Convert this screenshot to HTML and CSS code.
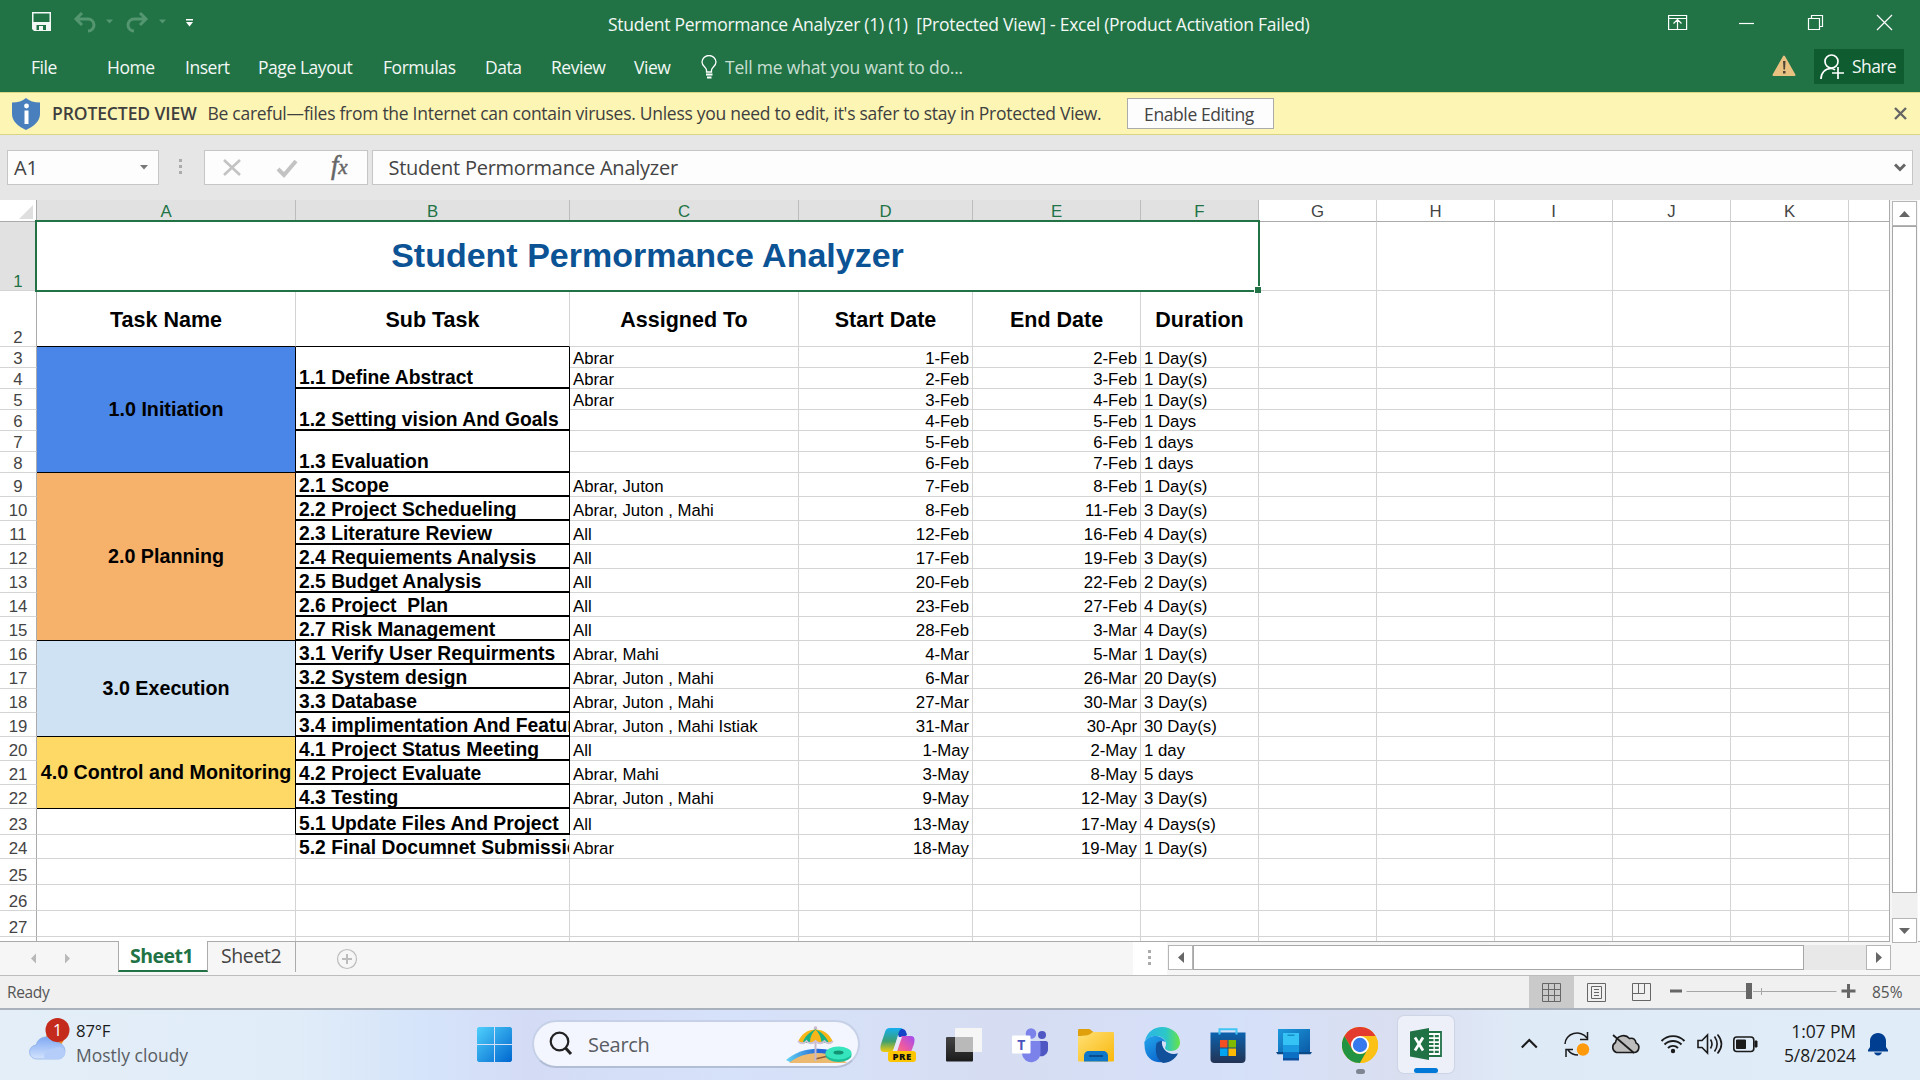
FILE: index.html
```html
<!DOCTYPE html>
<html lang="en">
<head>
<meta charset="utf-8">
<title>Student Permormance Analyzer - Excel</title>
<link rel="stylesheet" href="styles.css">
</head>
<body>
<div class="app">
  <header class="titlebar">
    <div class="quick">
      <svg width="200" height="30" viewBox="0 0 200 30">
        <path fill="#f4f8f5" fill-rule="evenodd" d="M0 3h19v19H2l-2-2zM1.500 4.500v8.500h16V4.500zM4.500 16v5h2.500v-4h4v4h3v-5z"/>
        <path fill="#f4f8f5" d="M8 18h1.500v3H8z"/>
        <g fill="none" stroke="#539670" stroke-width="3"><path d="M50 4l-6 6 6 6M45 10h11a5.500 5.500 0 0 1 0 12"/><path d="M108 4l6 6-6 6M113 10h-11a5.500 5.500 0 0 0 0 12"/></g>
        <path fill="#539670" d="M74 10.500h7l-3.500 4zM127 10.500h7l-3.500 4z"/>
        <path fill="#fff" d="M154 10h7v1.500h-7zM154 13h7l-3.500 4.500z"/>
      </svg>
    </div>
    <h1 class="doc-title">Student Permormance Analyzer (1) (1)&nbsp; [Protected View] - Excel (Product Activation Failed)</h1>
    <svg class="window-buttons" width="226" height="20" viewBox="0 0 226 20" fill="none" stroke="#fff" stroke-width="1.200">
      <path d="M.6 1.500h18v14H.6zM.6 4.500h18M9.500 15V6.500M5.500 9.500l4-4 4 4"/>
      <path d="M71 9.500h15"/>
      <path d="M140.500 4.500h11v11h-11zM143.500 4v-2.500h11v11h-3"/>
      <path d="M209 1l15 15M224 1l-15 15"/>
    </svg>
  </header>
  <nav class="ribbon">
    <span>File</span><span>Home</span><span>Insert</span><span>Page Layout</span><span>Formulas</span><span>Data</span><span>Review</span><span>View</span>
    <svg width="24" height="26" viewBox="0 0 24 26" fill="none" stroke="#fff" stroke-width="1.300"><path d="M5.500 17v-2C5 12 1 11 1 7a7 6.500 0 0 1 14 0c0 4-4 5-4.500 8v2z"/><path d="M5 19.500h6.500M6 22.500h4.500" stroke-width="2"/></svg>
    <span class="tell">Tell me what you want to do...</span>
    <svg class="warn" width="24" height="22" viewBox="0 0 24 22"><path d="M12 1.500L22.500 20h-21z" fill="#e9c181" stroke="#e9c181" stroke-width="2" stroke-linejoin="round"/><path d="M11 6h2.500l-.5 8.500h-1.500zM11 16h2.500v2.500H11z" fill="#4d4636"/></svg>
    <div class="share">
      <svg width="26" height="26" viewBox="0 0 26 26" fill="none" stroke="#fff" stroke-width="1.700"><ellipse cx="11.500" cy="7.500" rx="6.500" ry="6.500"/><path d="M1 25c0-6 4-10.500 10-10.500 2 0 3 .5 4 1.500M18 13v12M12 19h12"/></svg>
      <span>Share</span>
    </div>
  </nav>
  <section class="protected">
    <svg width="30" height="34" viewBox="0 0 30 34"><path d="M15 1c3.500 3 8 4.500 14 4.500V17c0 7-6 12.500-14 16C7 29.500 1 24 1 17V5.500C7 5.500 11.500 4 15 1z" fill="#4a7fbe"/><circle cx="15.500" cy="9" r="2.400" fill="#fff"/><path d="M13.500 13.500h4V27h-4z" fill="#fff"/></svg>
    <b>PROTECTED VIEW</b>
    <span class="warning-text">Be careful—files from the Internet can contain viruses. Unless you need to edit, it's safer to stay in Protected View.</span>
    <button class="enable">Enable Editing</button>
    <svg class="dismiss" width="13" height="13" viewBox="0 0 13 13"><path d="M1 1l11 11M12 1L1 12" stroke="#666" stroke-width="2.400"/></svg>
  </section>
  <section class="formula-bar">
    <div class="name-box"><span>A1</span><svg width="8" height="5" viewBox="0 0 8 5"><path d="M0 0h8L4 4.500z" fill="#777"/></svg></div>
    <div class="dots"><i></i><i></i><i></i></div>
    <div class="fx-box">
      <svg width="163" height="32" viewBox="0 0 163 32"><path d="M19 8l16 15M35 8L19 23" stroke="#c3c3c3" stroke-width="2.600"/><path d="M73 17l6 6L91 9" fill="none" stroke="#c3c3c3" stroke-width="4"/></svg>
      <em>f<small>x</small></em>
    </div>
    <div class="formula"><span>Student Permormance Analyzer</span><svg width="12" height="9" viewBox="0 0 12 9"><path d="M1 1.500l5 5 5-5" fill="none" stroke="#666" stroke-width="3"/></svg></div>
  </section>

  <main class="workspace">
    <table class="sheet">
      <colgroup><col class="w-head"><col class="w-a"><col class="w-b"><col class="w-c"><col class="w-d"><col class="w-e"><col class="w-g"><col class="w-g"><col class="w-g"><col class="w-g"><col class="w-g"><col class="w-g"><col class="w-l"></colgroup>
      <tr class="letters"><th class="corner"><svg width="14" height="14" viewBox="0 0 14 14"><path d="M14 0v14H0z" fill="#dfdfdf"/></svg></th><th class="on">A</th><th class="on">B</th><th class="on">C</th><th class="on">D</th><th class="on">E</th><th class="on">F</th><th>G</th><th>H</th><th>I</th><th>J</th><th>K</th><th></th></tr>
      <tr class="r69"><th class="on">1</th><td class="title" colspan="6">Student Permormance Analyzer<span class="selection"></span></td><td></td><td></td><td></td><td></td><td></td><td></td></tr>
      <tr class="r56 heads"><th>2</th><td class="line">Task Name</td><td class="line">Sub Task</td><td>Assigned To</td><td>Start Date</td><td>End Date</td><td>Duration</td><td></td><td></td><td></td><td></td><td></td><td></td></tr>
      <tr class="r21"><th>3</th><td rowspan="6" class="phase blue">1.0 Initiation</td><td rowspan="2" class="sub">1.1 Define Abstract</td><td>Abrar</td><td class="num">1-Feb</td><td class="num">2-Feb</td><td>1 Day(s)</td><td></td><td></td><td></td><td></td><td></td><td></td></tr>
      <tr class="r21"><th>4</th><td>Abrar</td><td class="num">2-Feb</td><td class="num">3-Feb</td><td>1 Day(s)</td><td></td><td></td><td></td><td></td><td></td><td></td></tr>
      <tr class="r21"><th>5</th><td rowspan="2" class="sub">1.2 Setting vision And Goals</td><td>Abrar</td><td class="num">3-Feb</td><td class="num">4-Feb</td><td>1 Day(s)</td><td></td><td></td><td></td><td></td><td></td><td></td></tr>
      <tr class="r21"><th>6</th><td></td><td class="num">4-Feb</td><td class="num">5-Feb</td><td>1 Days</td><td></td><td></td><td></td><td></td><td></td><td></td></tr>
      <tr class="r21"><th>7</th><td rowspan="2" class="sub">1.3 Evaluation</td><td></td><td class="num">5-Feb</td><td class="num">6-Feb</td><td>1 days</td><td></td><td></td><td></td><td></td><td></td><td></td></tr>
      <tr class="r21"><th>8</th><td></td><td class="num">6-Feb</td><td class="num">7-Feb</td><td>1 days</td><td></td><td></td><td></td><td></td><td></td><td></td></tr>
      <tr class="r24"><th>9</th><td rowspan="7" class="phase orange">2.0 Planning</td><td class="sub">2.1 Scope</td><td>Abrar, Juton</td><td class="num">7-Feb</td><td class="num">8-Feb</td><td>1 Day(s)</td><td></td><td></td><td></td><td></td><td></td><td></td></tr>
      <tr class="r24"><th>10</th><td class="sub">2.2 Project Schedueling</td><td>Abrar, Juton , Mahi</td><td class="num">8-Feb</td><td class="num">11-Feb</td><td>3 Day(s)</td><td></td><td></td><td></td><td></td><td></td><td></td></tr>
      <tr class="r24"><th>11</th><td class="sub">2.3 Literature Review</td><td>All</td><td class="num">12-Feb</td><td class="num">16-Feb</td><td>4 Day(s)</td><td></td><td></td><td></td><td></td><td></td><td></td></tr>
      <tr class="r24"><th>12</th><td class="sub">2.4 Requiements Analysis</td><td>All</td><td class="num">17-Feb</td><td class="num">19-Feb</td><td>3 Day(s)</td><td></td><td></td><td></td><td></td><td></td><td></td></tr>
      <tr class="r24"><th>13</th><td class="sub">2.5 Budget Analysis</td><td>All</td><td class="num">20-Feb</td><td class="num">22-Feb</td><td>2 Day(s)</td><td></td><td></td><td></td><td></td><td></td><td></td></tr>
      <tr class="r24"><th>14</th><td class="sub">2.6 Project&nbsp; Plan</td><td>All</td><td class="num">23-Feb</td><td class="num">27-Feb</td><td>4 Day(s)</td><td></td><td></td><td></td><td></td><td></td><td></td></tr>
      <tr class="r24"><th>15</th><td class="sub">2.7 Risk Management</td><td>All</td><td class="num">28-Feb</td><td class="num">3-Mar</td><td>4 Day(s)</td><td></td><td></td><td></td><td></td><td></td><td></td></tr>
      <tr class="r24"><th>16</th><td rowspan="4" class="phase sky">3.0 Execution</td><td class="sub">3.1 Verify User Requirments</td><td>Abrar, Mahi</td><td class="num">4-Mar</td><td class="num">5-Mar</td><td>1 Day(s)</td><td></td><td></td><td></td><td></td><td></td><td></td></tr>
      <tr class="r24"><th>17</th><td class="sub">3.2 System design</td><td>Abrar, Juton , Mahi</td><td class="num">6-Mar</td><td class="num">26-Mar</td><td>20 Day(s)</td><td></td><td></td><td></td><td></td><td></td><td></td></tr>
      <tr class="r24"><th>18</th><td class="sub">3.3 Database</td><td>Abrar, Juton , Mahi</td><td class="num">27-Mar</td><td class="num">30-Mar</td><td>3 Day(s)</td><td></td><td></td><td></td><td></td><td></td><td></td></tr>
      <tr class="r24"><th>19</th><td class="sub">3.4 implimentation And Featur</td><td>Abrar, Juton , Mahi Istiak</td><td class="num">31-Mar</td><td class="num">30-Apr</td><td>30 Day(s)</td><td></td><td></td><td></td><td></td><td></td><td></td></tr>
      <tr class="r24"><th>20</th><td rowspan="3" class="phase yellow">4.0 Control and Monitoring</td><td class="sub">4.1 Project Status Meeting</td><td>All</td><td class="num">1-May</td><td class="num">2-May</td><td>1 day</td><td></td><td></td><td></td><td></td><td></td><td></td></tr>
      <tr class="r24"><th>21</th><td class="sub">4.2 Project Evaluate</td><td>Abrar, Mahi</td><td class="num">3-May</td><td class="num">8-May</td><td>5 days</td><td></td><td></td><td></td><td></td><td></td><td></td></tr>
      <tr class="r24"><th>22</th><td class="sub">4.3 Testing</td><td>Abrar, Juton , Mahi</td><td class="num">9-May</td><td class="num">12-May</td><td>3 Day(s)</td><td></td><td></td><td></td><td></td><td></td><td></td></tr>
      <tr class="r26"><th>23</th><td class="edge"></td><td class="sub">5.1 Update Files And Project</td><td>All</td><td class="num">13-May</td><td class="num">17-May</td><td>4 Days(s)</td><td></td><td></td><td></td><td></td><td></td><td></td></tr>
      <tr class="r24"><th>24</th><td></td><td class="sub open">5.2 Final Documnet Submissio</td><td>Abrar</td><td class="num">18-May</td><td class="num">19-May</td><td>1 Day(s)</td><td></td><td></td><td></td><td></td><td></td><td></td></tr>
      <tr class="r26 blank"><th>25</th><td></td><td></td><td></td><td></td><td></td><td></td><td></td><td></td><td></td><td></td><td></td><td></td></tr>
      <tr class="r26 blank"><th>26</th><td></td><td></td><td></td><td></td><td></td><td></td><td></td><td></td><td></td><td></td><td></td><td></td></tr>
      <tr class="r26 blank"><th>27</th><td></td><td></td><td></td><td></td><td></td><td></td><td></td><td></td><td></td><td></td><td></td><td></td></tr>
      <tr class="r4"><th></th><td></td><td></td><td></td><td></td><td></td><td></td><td></td><td></td><td></td><td></td><td></td><td></td></tr>
    </table>
    <div class="vscroll">
      <div class="sbtn"><svg width="11" height="6" viewBox="0 0 11 6"><path d="M0 6h11L5.500 0z" fill="#666"/></svg></div>
      <div class="vthumb"></div>
      <div class="vtrack"></div>
      <div class="sbtn"><svg width="11" height="6" viewBox="0 0 11 6"><path d="M0 0h11L5.500 6z" fill="#666"/></svg></div>
    </div>
  </main>

  <div class="tabs">
    <div class="arrows"><svg width="118" height="33" viewBox="0 0 118 33" fill="#b9b9b9"><path d="M36 11.500v10l-5-5zM65 11.500v10l5-5z"/></svg></div>
    <div class="tab active">Sheet1</div>
    <div class="tab">Sheet2</div>
    <svg class="add" width="22" height="22" viewBox="0 0 22 22" fill="none" stroke="#bcbcbc"><circle cx="11" cy="11" r="9.500" stroke-width="1.200"/><path d="M11 6v10M6 11h10" stroke-width="2"/></svg>
    <div class="grip"><div class="dots"><i></i><i></i><i></i></div></div>
    <div class="hscroll">
      <div class="sbtn"><svg width="6" height="11" viewBox="0 0 6 11"><path d="M6 0v11L0 5.500z" fill="#666"/></svg></div>
      <div class="hthumb"></div>
      <div class="htrack"></div>
      <div class="sbtn"><svg width="6" height="11" viewBox="0 0 6 11"><path d="M0 0v11l6-5.500z" fill="#666"/></svg></div>
    </div>
  </div>

  <footer class="status">
    <span class="ready">Ready</span>
    <div class="view current"><svg width="19" height="19" viewBox="0 0 19 19" fill="none" stroke="#666"><path d="M.5.500h18v18H.5zM6.500.500v18M12.500.500v18M.5 6.500h18M.5 12.500h18"/></svg></div>
    <div class="view"><svg width="19" height="19" viewBox="0 0 19 19" fill="none" stroke="#666"><path d="M.5.500h18v18H.5zM4.500 3.500h10v12h-10zM7 6.500h5M7 9.500h5M7 12.500h5"/></svg></div>
    <div class="view"><svg width="19" height="19" viewBox="0 0 19 19" fill="none" stroke="#666"><path d="M.5.500h18v17H.5zM.5 10.500h12V.500M6.500.500v10"/></svg></div>
    <svg class="zoom" width="187" height="20" viewBox="0 0 187 20"><path d="M0 8.500h12v3H0zM171.500 8.500h14v3h-14zM177 3h3v14h-3zM76 2h6v16h-6z" fill="#666"/><path d="M16.500 10.500H76M83 10.500h83.500M91.500 7v7" stroke="#a6a6a6" fill="none"/></svg>
    <span class="percent">85%</span>
  </footer>
</div>

<div class="taskbar">
  <div class="weather">
    <svg width="42" height="46" viewBox="0 0 42 46">
      <defs><linearGradient id="cl" x1="0" y1="0" x2="0" y2="1"><stop offset="0" stop-color="#7fa9f3"/><stop offset="1" stop-color="#d3e3fd"/></linearGradient></defs>
      <circle cx="26" cy="20" r="9" fill="#f08a24"/>
      <path d="M8 41a7 7 0 0 1-1-14 11 11 0 0 1 20-3 9 9 0 0 1 9 9c0 5-3 8-7 8z" fill="url(#cl)" stroke="#7ea4e6" stroke-width=".6"/>
      <path d="M16 41a8 7 0 0 1 8-10c3-3 11-3 12 3 0 5-3 7-7 7z" fill="#b4cdf9"/>
      <circle cx="28.500" cy="12" r="12" fill="#c42b1c"/><text x="28.500" y="18" text-anchor="middle" fill="#fff" font-family="Open Sans, sans-serif" font-size="16">1</text>
    </svg>
    <div><p class="temp">87°F</p><p>Mostly cloudy</p></div>
  </div>
  <svg class="start" width="35" height="35" viewBox="0 0 35 35">
    <defs><linearGradient id="w" x1="0" y1="0" x2="1" y2="1"><stop offset="0" stop-color="#4fd0fb"/><stop offset="1" stop-color="#0067cf"/></linearGradient></defs>
    <path fill="url(#w)" d="M1.500 0H17v17H0V1.500zM18 0h15.500L35 1.500V17H18zM0 18h17v17H1.500L0 33.500zM18 18h17v15.500L33.500 35H18z"/>
  </svg>
  <div class="search">
    <svg width="24" height="26" viewBox="0 0 24 26" fill="none" stroke="#222"><circle cx="10.500" cy="10.500" r="8.800" stroke-width="2.200"/><path d="M16.500 17l5.500 6" stroke-width="3"/></svg>
    <span>Search</span>
    <svg class="beach" width="66" height="38" viewBox="0 0 66 38">
      <defs><linearGradient id="sea"><stop offset="0" stop-color="#62d4f2"/><stop offset=".6" stop-color="#2468d8"/><stop offset="1" stop-color="#2468d8"/></linearGradient></defs>
      <path d="M0 34c12-11 32-14 46-9l8 8-20 4H6z" fill="url(#sea)"/>
      <path d="M3 37c10-9 26-12 38-9 8 1 14 4 20 9z" fill="#ecb970"/>
      <path d="M29 33l18-4" stroke="#8c5a3c" stroke-width="1.300"/>
      <path d="M28.500 3h2v32h-2z" fill="#c5b8cf"/><circle cx="29.500" cy="2" r="1.800" fill="#c5b8cf"/>
      <path d="M12 16C15 8 22 3.500 29.500 3.500S44 8 47 16c-3 2-5 2-8 0-3 2-6 2-9 0-3 2-6 2-9 0-3 2-6 2-9 0z" fill="#f6b61a"/>
      <path d="M29 3.500C24 6 19 10 17 16c3 1 5 1 7 0 0-5 2-9 5.500-12.500C33 7 35 11 35.500 16c2 1 5 1 7 0-3-6-8-11-13.500-12.500z" fill="#17b183"/>
      <path d="M12 15c2 3 6 3 8.500 0 2.500 3 6 3 9 0 3 3 6 3 9 0 2.500 3 6 3 8.500 0" fill="none" stroke="#cdc1dd" stroke-width="1.800"/>
      <ellipse cx="52.500" cy="29" rx="13" ry="7" fill="#1bbf97"/><ellipse cx="52.500" cy="27" rx="13" ry="6.500" fill="#36e5bd"/><ellipse cx="52.500" cy="26.500" rx="5" ry="2" fill="#129473"/>
    </svg>
  </div>
  <div class="apps">
    <svg width="36" height="36" viewBox="0 0 36 36">
      <defs><linearGradient id="c1" x1="0" y1="0" x2="0" y2="1"><stop offset="0" stop-color="#16aef0"/><stop offset=".55" stop-color="#3c9f72"/><stop offset="1" stop-color="#f5cd0a"/></linearGradient><linearGradient id="c2" x1="1" y1="0" x2="0" y2="1"><stop offset="0" stop-color="#a04af4"/><stop offset=".5" stop-color="#ee5aa0"/><stop offset="1" stop-color="#fb9a45"/></linearGradient></defs>
      <path d="M16 2h6c3 0 4 2 5 6l-3 2h-5z" fill="#1544c8"/>
      <path d="M10 1h13c-3 1-4 3-5 7l-4 13c-1 3-2 4-5 4H4c-4 0-4-4-3-8L5 5c1-3 2-4 5-4z" fill="url(#c1)"/>
      <path d="M22 9h9c4 0 4 4 3 8l-3 8c-1 4-3 6-6 6H12c3-1 4-3 5-6l3-12c.500-3 1-4 2-4z" fill="url(#c2)"/>
      <path d="M18 10h4l-5 14h-4z" fill="#e8e6fb"/>
      <rect x="8" y="24" width="28" height="11" rx="3" fill="#fdc500"/><text x="22.200" y="33" text-anchor="middle" font-family="Open Sans, sans-serif" font-weight="800" font-size="9.500" letter-spacing=".5" fill="#111">PRE</text>
    </svg>
    <svg width="36" height="36" viewBox="0 0 36 36"><defs><linearGradient id="tv" x1="0" y1="0" x2="0" y2="1"><stop offset="0" stop-color="#444"/><stop offset="1" stop-color="#1c1c1c"/></linearGradient></defs><rect y="10" width="27" height="24.500" rx="1" fill="url(#tv)"/><rect x="9" y="1" width="27" height="24" rx="1" fill="#f6f6f6"/><path d="M9 10h18v15H9z" fill="#b9b9b9"/></svg>
    <svg width="36" height="36" viewBox="0 0 36 36"><circle cx="30" cy="8" r="4" fill="#4f57c3"/><path d="M25 14h9c1 0 2 1 2 2v7a7 7 0 0 1-11 5z" fill="#4f57c3"/><circle cx="19" cy="6.500" r="5.300" fill="#7b83eb"/><path d="M10 14h17c1 0 1.500 1 1.500 2v9a9.200 9.200 0 0 1-18.500 2z" fill="#7b83eb"/><rect y="8.500" width="18.500" height="18" rx="1.200" fill="#fff"/><text x="9.200" y="22.500" text-anchor="middle" font-family="Open Sans, sans-serif" font-weight="700" font-size="14" fill="#4b53bc">T</text></svg>
    <svg width="36" height="36" viewBox="0 0 36 36"><defs><linearGradient id="fo" x1="0" y1="0" x2="1" y2="1"><stop offset="0" stop-color="#ffe076"/><stop offset="1" stop-color="#f9b80c"/></linearGradient></defs><path d="M0 3.500C0 2.500.5 2 1.500 2H11c2 0 3 3 5 3l-4 4H0z" fill="#dfa00b"/><path d="M0 9.500C7 8 10 9 13 6.500 14 5 15 5 16 5h18.500c1 0 1.500.5 1.500 1.500V33c0 1-.5 1.500-1.500 1.500h-33C.5 34.500 0 34 0 33z" fill="url(#fo)"/><path d="M6 34.500V29c0-3 2-5 5-5h14c3 0 5 2 5 5v5.500z" fill="#0f77c8"/><path d="M11 29h14" stroke="#0a4d8e" stroke-width="2"/></svg>
    <svg width="36" height="36" viewBox="0 0 36 36"><defs><linearGradient id="e1"><stop offset="0" stop-color="#2cb4e8"/><stop offset=".6" stop-color="#2cc7c8"/><stop offset="1" stop-color="#67e447"/></linearGradient><linearGradient id="e2" x1="0" y1="0" x2=".6" y2="1"><stop offset="0" stop-color="#23a5ea"/><stop offset="1" stop-color="#0b66cf"/></linearGradient></defs><path d="M1 14C3 5 10 0 18 0c10 0 18 7 18 15.500 0 5-4 8.500-9 8.500-4 0-6-1.500-6-3 0-1 1-1.500 1-4 0-4-4-8-9.500-8C7 9 3 11 1 14z" fill="url(#e1)"/><path d="M.3 15C3 10.500 8 8.500 12.500 9c4 .5 8 3 9 6-6-3-9 1-9 6 0 7 7 12 14 11-10 7-26 3-26-14z" fill="url(#e2)"/><path d="M12 19c0-3 2-5 6-5-1 6 4 13 12 13 3 0 4-1 4-1-2 6-9 10-15 10-5-2-8-8-7-17z" fill="#11519b"/></svg>
    <svg width="36" height="36" viewBox="0 0 36 36"><defs><linearGradient id="st" x1="0" y1="0" x2="0" y2="1"><stop offset="0" stop-color="#0c62ae"/><stop offset="1" stop-color="#233353"/></linearGradient></defs><path d="M.5 5.500h35V32c0 2.500-1.500 4-4 4h-27c-2.500 0-4-1.500-4-4z" fill="url(#st)"/><path d="M9.500 7.500V2.200h17v5.300" fill="none" stroke="#40c5f5" stroke-width="2"/><path d="M10 13h7.500v7.500H10z" fill="#f25022"/><path d="M18.500 13H26v7.500h-7.500z" fill="#7fba00"/><path d="M10 21.500h7.500V29H10z" fill="#00a4ef"/><path d="M18.500 21.500H26V29h-7.500z" fill="#ffb900"/></svg>
    <svg width="36" height="36" viewBox="0 0 36 36"><defs><linearGradient id="ph" x1="0" y1="0" x2="1" y2="1"><stop offset="0" stop-color="#1d9adf"/><stop offset="1" stop-color="#0a59a4"/></linearGradient></defs><path d="M2 2h32v24H2z" fill="url(#ph)"/><path d="M0 25h36l-1.500 2.200H1.500z" fill="#0b4a86"/><path d="M7 6h16v27.500H7z" fill="#0b4f9e"/><path d="M7 6h16v19.500H7z" fill="#1a9ae0"/><path d="M7 6h16v12H7z" fill="#35c3f5"/><path d="M7 25.500h16V31H7z" fill="#0b6fc4"/><path d="M11.500 7.500h7V9h-7z" fill="#178fc4"/></svg>
    <div class="running"><svg width="36" height="36" viewBox="0 0 36 36"><circle cx="18" cy="18" r="18" fill="#fbc116"/><path d="M2.400 9A18 18 0 0 1 33.600 9H18l-7.800 13.500z" fill="#e33b2e"/><path d="M2.400 9l7.800 13.500a9 9 0 0 0 15.600 0L18 36A18 18 0 0 1 2.400 9z" fill="#229342"/><path d="M25.800 22.500L18 36A18 18 0 0 0 33.600 9H18z" fill="#fbc116"/><circle cx="18" cy="18" r="9" fill="#fff"/><circle cx="18" cy="18" r="7.200" fill="#3579ec"/></svg><i></i></div>
    <div class="running active"><svg width="32" height="32" viewBox="0 0 32 32"><path d="M17 4h14v24H17z" fill="#fff" stroke="#1f7246" stroke-width="1.800"/><path d="M19 8.200h4.500M19 12.100h4.500M19 16h4.500M19 19.900h4.500M19 23.800h4.500M24.800 8.200h4M24.800 12.100h4M24.800 16h4M24.800 19.900h4M24.800 23.800h4" stroke="#1f7246" stroke-width="2.200"/><path d="M0 3.500L19 0v32L0 28.500z" fill="#207245"/><path d="M5 9.500l8 13M13 9.500l-8 13" stroke="#fff" stroke-width="2.700"/></svg><i></i></div>
  </div>
  <div class="tray">
    <svg width="241" height="40" viewBox="1 0 241 40" fill="none" stroke="#1b1b1b" stroke-width="1.600">
      <path d="M1.800 23.500l7.500-7.500 7.500 7.500" stroke-width="2.200"/>
      <path d="M45 20a12 11 0 0 1 22-6M67.500 8v7.500h-7.500M58 31a12 11 0 0 1-10-5M46 33v-7.500h7" stroke-width="1.500"/><circle cx="63" cy="25.500" r="6.200" fill="#ff9a0c" stroke="none"/>
      <path d="M96.500 28.500a5.500 5.500 0 0 1-1-10 8 8 0 0 1 14-4c4-1 6 1 6.500 4.500a5 5 0 0 1-2.500 9.500z" fill="#bdbdbd"/><path d="M93 11l21 18" stroke-width="1.700"/>
      <g stroke-width="1.900"><path d="M141.500 17a16 16 0 0 1 23 0M144.500 20.500a12 12 0 0 1 17 0M148 24a7 7 0 0 1 10 0"/></g><circle cx="153" cy="27" r="2.200" fill="#1b1b1b" stroke="none"/>
      <path d="M178 16.500h4l5.500-5.500v18l-5.500-5.500h-4zM190.500 15.500c2 3 2 6 0 9M194.500 12.500c3.500 5 3.500 10 0 15M197.500 10.500c5 6 5 13 0 19"/>
      <rect x="213.800" y="13" width="20" height="14.500" rx="3"/><path d="M216.500 16h9v8.500h-9zM235 17h2v6h-2z" fill="#1b1b1b" stroke-width="1"/>
    </svg>
    <div class="clock"><p>1:07 PM</p><p>5/8/2024</p></div>
    <svg width="20" height="24" viewBox="0 0 20 24" fill="#003e92"><path d="M10 1c5 0 8 4 8 8v6l2 3v1.500H0V18l2-3V9c0-4 3-8 8-8zM6 20.500h8c-.5 1.500-2 3-4 3s-3.500-1.500-4-3z"/></svg>
  </div>
</div>
</body>
</html>
```
FILE: styles.css
```css
* { box-sizing: border-box; margin: 0; padding: 0; }
body {
  width: 1920px; height: 1080px; overflow: hidden;
  display: flex; flex-direction: column;
  font: 17.5px/24px "Open Sans", "Noto Sans", sans-serif;
  letter-spacing: -.27px; color: #444; background: #e6e6e6;
}
svg { display: block; flex: none; }
.app { height: 1010px; display: flex; flex-direction: column; }

/* Title bar and ribbon */
.titlebar { height: 46px; background: #217346; display: flex; align-items: flex-start; color: #fff; }
.quick { width: 608px; padding: 9px 0 0 32px; flex: none; }
.doc-title { font-size: 17.5px; font-weight: 400; line-height: 24px; margin-top: 12px; white-space: nowrap; width: 1060px; letter-spacing: -.26px; color: #f3f8f5; }
.window-buttons { margin-top: 14px; }
.ribbon {
  height: 46px; background: #217346; color: #f3f8f5; padding: 0 16px 0 31px;
  display: grid; grid-template-columns: 76px 78px 73px 125px 102px 66px 83px 67px 24px 1fr 41px 90px;
  align-items: center; letter-spacing: -.45px; white-space: nowrap;
}
.ribbon > span { padding-bottom: 5px; }
.ribbon > svg { margin-bottom: 3px; }
.ribbon .tell { color: #c9dfd2; letter-spacing: -.2px; }
.ribbon .warn { margin-left: -1px; margin-bottom: 6px; }
.share { height: 35px; margin-bottom: 5px; background: #0e5c2f; display: flex; align-items: center; gap: 6px; padding-left: 6px; }
.share span { letter-spacing: -.6px; padding-bottom: 1px; }

/* Protected view banner */
.protected {
  height: 43px; background: #fcf5b4; border-top: 1px solid #d9d585; border-bottom: 1px solid #d9d585;
  display: flex; align-items: center; padding: 0 13px 0 11px; color: #3f3f3f; white-space: nowrap;
}
.protected b { font-weight: 600; margin-left: 11px; width: 155.500px; letter-spacing: -.1px; padding-bottom: 1px; }
.warning-text { width: 919.500px; letter-spacing: -.28px; padding-bottom: 1px; }
.enable { width: 147px; height: 31px; border: 1px solid #ababab; background: #fdfdfd; color: #444; font: inherit; letter-spacing: -.4px; line-height: 28px; padding: 0 3px 0 0; }
.dismiss { margin-left: auto; }

/* Formula bar */
.formula-bar { height: 65px; background: #e6e6e6; padding: 15px 7px 0; display: flex; font-size: 20px; letter-spacing: -.25px; }
.name-box, .fx-box, .formula { height: 35px; border: 1px solid #c6c6c6; background: #fdfdfd; display: flex; align-items: center; }
.name-box { width: 152px; padding: 0 10px 0 6px; justify-content: space-between; }
.dots { display: flex; flex-direction: column; gap: 3px; width: 3px; }
.dots i { width: 3px; height: 3px; background: #ababab; }
.formula-bar .dots { margin: 9px 21px 0 20px; }
.fx-box { width: 164px; margin-left: 1px; position: relative; }
.fx-box em { position: absolute; left: 126px; top: -2px; font: italic 27px/32px "Liberation Serif", serif; -webkit-text-stroke: .5px #666; color: #666; }
.fx-box small { font-size: 21px; }
.formula { width: 1541px; margin-left: 4px; padding: 0 6px 0 15.500px; justify-content: space-between; }

/* Worksheet */
.workspace { height: 742px; display: flex; background: #fff; border-bottom: 1px solid #ababab; }
.sheet { table-layout: fixed; width: 1890px; height: 741px; border-collapse: separate; border-spacing: 0; font: 16.800px/16px "Liberation Sans", Arial, sans-serif; letter-spacing: 0; color: #000; flex: none; border-right: 1px solid #ababab; }
.w-head { width: 37px; } .w-a { width: 259px; } .w-b { width: 274px; } .w-c { width: 229px; }
.w-d { width: 174px; } .w-e { width: 168px; } .w-g { width: 118px; } .w-l { width: 40px; }
.sheet td, .sheet th { border-right: 1px solid #d4d4d4; border-bottom: 1px solid #d4d4d4; white-space: nowrap; overflow: hidden; vertical-align: bottom; padding: 0 3px; }
.sheet td:last-child { border-right: 0; }
.sheet th { font-weight: 400; color: #444; padding: 0; border-right-color: #ababab; text-align: center; }
.sheet th.on { background: #e1e1e1; color: #217346; }
.letters { height: 22px; }
.sheet .letters th { border-bottom-color: #ababab; border-right-color: #d0d0d0; vertical-align: middle; line-height: 18px; padding-top: 3px; }
.sheet .letters th.on { border-right-color: #bcbcbc; }
.sheet .letters th:last-child { border-right: 0; }
.corner svg { margin: 0 0 0 19px; }
.sheet .letters .corner { border-right-color: #ababab; }
.r69 { height: 69px; } .r56 { height: 56px; } .r21 { height: 21px; } .r24 { height: 24px; } .r26 { height: 26px; } .r4 { height: 4px; }
.r4 td, .sheet .r4 th { border-bottom: 0; line-height: 0; }
.r24 td, .r24 th, .r26 td, .r26 th { padding-bottom: 1px !important; }
.blank th { padding-bottom: 0 !important; }
.sheet .title { position: relative; overflow: visible; font-size: 34px; font-weight: 700; line-height: 40px; color: #0b5394; text-align: center; vertical-align: middle; padding-bottom: 2px; }
.selection { position: absolute; inset: -2px -2px -2px -2px; border: 2px solid #217346; }
.selection::after { content: ""; position: absolute; right: -3px; bottom: -3px; width: 6px; height: 6px; background: #217346; border: 1px solid #fff; border-width: 1px 0 0 1px; }
.heads td { font-size: 21.500px; font-weight: 700; line-height: 26px; text-align: center; vertical-align: middle; padding-top: 2px; }
.sheet td.line { border-bottom-color: #000; }
.num { text-align: right; }
.sheet .phase { font-size: 19.700px; font-weight: 700; line-height: 22px; text-align: center; vertical-align: middle; border-right-color: #000; border-bottom-color: #000; padding: 0; }
.sheet .blue { background: #4a86e8; padding-bottom: 2px; } .orange { background: #f6b26b; } .sky { background: #cfe2f3; } .yellow { background: #ffd966; }
.sheet .sub { font-size: 19.300px; font-weight: 700; line-height: 18px; border-right-color: #000; border-bottom: 2px solid #000; padding-bottom: 0 !important; padding-right: 0; }
.sheet .sub.open { border-bottom: 1px solid #d4d4d4; border-right-color: #d4d4d4; padding-bottom: 1px !important; }
.sheet .edge { border-right-color: #000; }

/* Scroll bars */
.sbtn { width: 25px; height: 25px; border: 1px solid #b5b5b5; background: #fff; display: flex; align-items: center; justify-content: center; flex: none; }
.vscroll { width: 28px; height: 743px; padding: 1px 1px 0 2px; display: flex; flex-direction: column; background: #f6f6f6; position: relative; z-index: 1; flex: none; }
.vthumb { width: 25px; height: 667px; border: 1px solid #a6a6a6; background: #fff; flex: none; }
.vtrack { width: 25px; height: 25px; background: #f0f0f0; flex: none; }

/* Sheet tabs */
.tabs { height: 33px; background: #f6f6f6; display: flex; }
.tab { height: 30px; font-size: 19.500px; line-height: 28px; letter-spacing: -.4px; width: 88px; padding-left: 13px; }
.tab.active { width: 90px; margin-top: -1px; height: 31px; background: #fff; border: solid #ababab; border-width: 0 1px; border-bottom: 2px solid #217346; color: #217346; font-weight: 700; padding-left: 11px; letter-spacing: -.5px; line-height: 29px; }
.tab:not(.active) { border-right: 1px solid #ababab; }
.add { margin: 6px 0 0 40px; }
.grip { width: 34px; margin-left: 775px; background: #fff; padding: 8px 0 0 15px; }
.grip .dots { height: 15px; }
.hscroll { display: flex; padding: 3px 0 0 1px; }
.hthumb { width: 611px; height: 25px; border: 1px solid #a6a6a6; background: #fff; }
.htrack { width: 62px; height: 25px; background: #e8e8e8; }

/* Status bar */
.status { height: 35px; background: #f0f0f0; border-top: 1px solid #bcbcbc; border-bottom: 2px solid #a9b1bd; display: flex; align-items: center; font-size: 15.500px; letter-spacing: -.35px; color: #555; }
.ready { width: 1529px; padding-left: 7px; }
.view { width: 45px; height: 32px; display: flex; align-items: center; justify-content: center; }
.view.current { background: #cacaca; }
.zoom { margin-left: 6px; margin-bottom: 2px; }
.percent { margin-left: 15px; letter-spacing: 0; }

/* Taskbar */
.taskbar {
  height: 70px; display: flex; color: #5a5d63;
  background: linear-gradient(90deg, #e3eef8 0, #e0ecf8 300px, #d5e4fa 420px, #d4dcf5 530px, #d6e2fa 730px, #d6ddf2 1000px, #d5e0f9 1240px, #dadff0 1400px, #dfeaf7 1520px, #e0edf8 100%);
}
.weather { width: 477px; display: flex; padding-left: 29px; }
.weather svg { margin: 8px 5px 0 0; }
.weather p { letter-spacing: 0; }
.weather .temp { color: #1c1c1c; margin-top: 9px; font-size: 16.800px; letter-spacing: -.2px; }
.start { margin-top: 17px; }
.search { width: 328px; height: 48px; margin: 10px 0 0 20px; border-radius: 24px; background: #f3f6fe; border: 2px solid #c6d1e7; border-bottom-color: #b2bdd6; display: flex; align-items: center; padding: 0 6px 0 15px; font-size: 20px; letter-spacing: -.3px; }
.search svg { margin-bottom: 1px; }
.search span { margin: 1px 0 0 15px; }
.search .beach { margin: 2px 0 0 auto; }
.apps { display: flex; gap: 30px; margin: 17px 0 0 20px; height: 40px; }
.running { position: relative; }
.running i { position: absolute; left: 14px; top: 42px; width: 9px; height: 5px; border-radius: 3px; background: #7f8591; }
.running.active { width: 56px; height: 57px; margin: -11px 0 0 -10px; padding: 12px; background: #edf0f9; border-radius: 6px; box-shadow: 0 0 1px 1px #cdd4e5; }
.running.active i { left: 16px; top: 52px; width: 24px; background: #0078d7; }
.tray { margin-left: 67px; display: flex; white-space: nowrap; }
.tray > svg:first-child { margin-top: 14px; }
.tray > svg:last-child { margin: 22px 0 0 12px; }
.clock { width: 94px; color: #1b1b1b; text-align: right; padding-top: 9px; letter-spacing: -.1px; }
.clock p { line-height: 24px; }
```
